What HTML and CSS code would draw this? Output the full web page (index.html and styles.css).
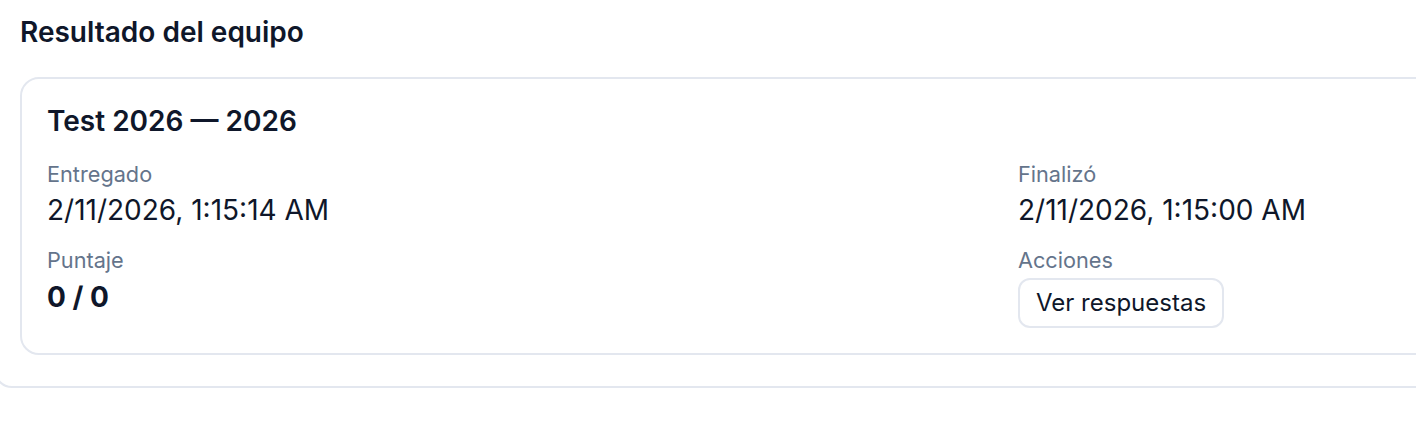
FILE: index.html
```html
<!DOCTYPE html>
<html lang="es">
<head>
<meta charset="utf-8">
<title>Resultado del equipo</title>
<link rel="stylesheet" href="styles.css">
</head>
<body>
  <section class="panel">
    <h2 class="panel-title">Resultado del equipo</h2>
    <article class="result-card">
      <h3 class="result-title">Test 2026 — 2026</h3>
      <div class="result-grid">
        <div class="field">
          <div class="field-label">Entregado</div>
          <div class="field-value">2/11/2026, 1:15:14 AM</div>
        </div>
        <div class="field">
          <div class="field-label">Finalizó</div>
          <div class="field-value">2/11/2026, 1:15:00 AM</div>
        </div>
        <div class="field">
          <div class="field-label">Puntaje</div>
          <div class="field-value score">0 / 0</div>
        </div>
        <div class="field">
          <div class="field-label">Acciones</div>
          <button class="btn-outline" type="button">Ver respuestas</button>
        </div>
      </div>
    </article>
  </section>
</body>
</html>
```

FILE: styles.css
```css
* { box-sizing: border-box; }

html, body {
  margin: 0;
  padding: 0;
  overflow: hidden;
  background: #ffffff;
}

body {
  font-family: Inter, "Noto Sans", "Liberation Sans", sans-serif;
  color: #0f172a;
  width: 1416px;
  height: 426px;
}

.panel {
  width: 2030px;
  margin-left: -6px;
  margin-top: -40px;
  padding: 52px 24px 31px 24px;
  border: 2px solid #e3e7ef;
  border-radius: 18px;
}

.panel-title {
  margin: 0 0 27px 0;
  font-size: 28px;
  line-height: 36px;
  font-weight: 600;
}

.result-card {
  border: 2px solid #e3e7ef;
  border-radius: 19px;
  padding: 24px 25px 25px 25px;
}

.result-title {
  margin: 0 0 20px 0;
  font-size: 28px;
  line-height: 36px;
  font-weight: 600;
}

.result-grid {
  display: grid;
  grid-template-columns: 947px 947px;
  column-gap: 24px;
  row-gap: 17px;
}

.field-label {
  font-size: 21.7px;
  line-height: 30px;
  color: #64748b;
  margin-bottom: 3px;
}

.field-value {
  font-size: 28px;
  line-height: 36px;
  color: #0f172a;
}

.field-value.score {
  font-weight: 700;
  margin-top: 4px;
}

.btn-outline {
  display: block;
  font-family: inherit;
  font-size: 24px;
  line-height: 30px;
  color: #0f172a;
  background: #ffffff;
  border: 2px solid #e3e7ef;
  border-radius: 12px;
  padding: 8px 16px;
  cursor: pointer;
}
```
